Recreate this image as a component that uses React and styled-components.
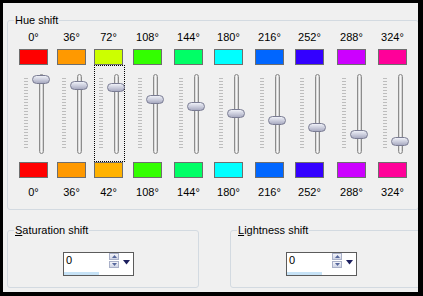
import React from 'react';
import styled, { createGlobalStyle } from 'styled-components';

const Global = createGlobalStyle`
  html, body { margin: 0; padding: 0; background: #000; }
  body {
    width: 423px; height: 296px; overflow: hidden;
    font-family: "Liberation Sans", Arial, sans-serif; font-size: 11px; color: #000;
  }
`;

const Frame = styled.div`
  box-sizing: border-box;
  width: 423px;
  height: 296px;
  border-style: solid;
  border-color: #000;
  border-width: 3px 5px 4px 3px;
  background: #f0f0f0;
  overflow: hidden;
  display: flex;
  flex-direction: column;
  align-items: flex-start;
`;

const Group = styled.fieldset`
  box-sizing: border-box;
  margin: 0;
  padding: ${(p) => p.$pad};
  border: 1px solid #d3dae1;
  border-radius: 3px;
  min-inline-size: 0;
  width: ${(p) => p.$w}px;
  flex: none;
`;

const Legend = styled.legend`
  margin-left: 6px;
  padding: 0 1px;
  font: 11px/13px "Liberation Sans", Arial, sans-serif;
  color: #000;
`;

const HueGroup = styled(Group)`
  margin: 11px 0 0 4px;
`;

const Columns = styled.div`
  display: grid;
  grid-template-columns: 38px 37px 39px 41px 40px 41px 40px 42px 41px 41px;
  padding-left: 11px;
`;

const Column = styled.div`
  display: flex;
  flex-direction: column;
  align-items: flex-start;
`;

const Degree = styled.div`
  width: 29px;
  text-align: center;
  line-height: 13px;
  font-size: 11px;
  white-space: nowrap;
  margin-top: ${(p) => (p.$bottom ? 8 : 0)}px;
  margin-bottom: ${(p) => (p.$bottom ? 0 : 5)}px;
`;

const Swatch = styled.div`
  box-sizing: border-box;
  width: 29px;
  height: 16px;
  border: 1px solid #6e6e6e;
  background: ${(p) => p.$color};
`;

const SliderBox = styled.div`
  box-sizing: border-box;
  position: relative;
  width: 31px;
  height: 97px;
  border: 1px ${(p) => (p.$focused ? 'dotted #000' : 'solid transparent')};
  display: flex;
  align-items: flex-start;
  padding-left: 4px;
`;

const Ticks = styled.div`
  width: 4px;
  height: 71px;
  margin-top: 12px;
  background: repeating-linear-gradient(to bottom, #bdbdbd 0 1px, transparent 1px 3px);
`;

const Track = styled.div`
  box-sizing: border-box;
  width: 5px;
  height: 80px;
  margin: 8px 0 0 11px;
  border: 1px solid #8c8c8c;
  border-radius: 3px;
  background: linear-gradient(to right, #cfcfcf, #f5f5f5 50%, #c6c6c6);
`;

const Thumb = styled.div`
  box-sizing: border-box;
  position: absolute;
  left: 12px;
  width: 18px;
  height: 9px;
  border: 1px solid #7a7c93;
  border-radius: 5px;
  background: linear-gradient(to bottom, #eef0f7, #c9cbdb 55%, #a9abc1);
`;

const BottomRow = styled.div`
  display: flex;
  gap: 31px;
  margin: 14px 0 0 4px;
`;

const SpinBox = styled.div`
  box-sizing: border-box;
  width: 71px;
  height: 24px;
  margin-left: 55px;
  border: 1px solid #5b5b5b;
  background: #fff;
  display: flex;
  flex-direction: column;
`;

const SpinTop = styled.div`
  display: flex;
  align-items: flex-start;
`;

const SpinValue = styled.span`
  width: 43px;
  padding: 1px 0 0 2px;
  line-height: 13px;
  font-size: 11px;
`;

const SpinButtons = styled.div`
  display: flex;
  flex-direction: column;
  gap: 1px;
`;

const SpinButton = styled.div`
  box-sizing: border-box;
  width: 10px;
  height: 7px;
  border: 1px solid #a9b0c8;
  background: linear-gradient(to bottom, #f4f5fa, #cfd4e6);
  display: flex;
  align-items: center;
  justify-content: center;
`;

const DropArrow = styled.svg`
  margin: 7px 0 0 4px;
`;

const SpinBar = styled.div`
  width: 35px;
  height: 3px;
  margin-top: auto;
  background: #c6e2f6;
`;

const hues = [
  { top: '0°', topC: '#ff0000', bot: '0°', botC: '#ff0000', v: 0 },
  { top: '36°', topC: '#ff9900', bot: '36°', botC: '#ff9900', v: 36 },
  { top: '72°', topC: '#ccff00', bot: '42°', botC: '#ffb200', v: 42, focused: true },
  { top: '108°', topC: '#33ff00', bot: '108°', botC: '#33ff00', v: 108 },
  { top: '144°', topC: '#00ff66', bot: '144°', botC: '#00ff66', v: 144 },
  { top: '180°', topC: '#00ffff', bot: '180°', botC: '#00ffff', v: 180 },
  { top: '216°', topC: '#0066ff', bot: '216°', botC: '#0066ff', v: 216 },
  { top: '252°', topC: '#3300ff', bot: '252°', botC: '#3300ff', v: 252 },
  { top: '288°', topC: '#cc00ff', bot: '288°', botC: '#cc00ff', v: 288 },
  { top: '324°', topC: '#ff0099', bot: '324°', botC: '#ff0099', v: 324 },
];

function Spinner() {
  return (
    <SpinBox>
      <SpinTop>
        <SpinValue>0</SpinValue>
        <SpinButtons>
          <SpinButton>
            <svg width="5" height="3" viewBox="0 0 5 3"><path d="M0 3 L2.5 0 L5 3 Z" fill="#56679c" /></svg>
          </SpinButton>
          <SpinButton>
            <svg width="5" height="3" viewBox="0 0 5 3"><path d="M0 0 L2.5 3 L5 0 Z" fill="#56679c" /></svg>
          </SpinButton>
        </SpinButtons>
        <DropArrow width="7" height="5" viewBox="0 0 7 5">
          <path d="M0 0 L7 0 L3.5 4.5 Z" fill="#1c1f5e" />
        </DropArrow>
      </SpinTop>
      <SpinBar />
    </SpinBox>
  );
}

export default function App() {
  return (
    <>
      <Global />
      <Frame>
        <HueGroup $w={412} $pad="4px 0 10px 0">
          <Legend>Hue shift</Legend>
          <Columns>
            {hues.map((h) => (
              <Column key={h.top}>
                <Degree>{h.top}</Degree>
                <Swatch $color={h.topC} />
                <SliderBox $focused={h.focused}>
                  <Ticks />
                  <Track />
                  <Thumb style={{ top: Math.round(8.5 + (h.v * 69) / 360) }} />
                </SliderBox>
                <Swatch $color={h.botC} />
                <Degree $bottom>{h.bot}</Degree>
              </Column>
            ))}
          </Columns>
        </HueGroup>
        <BottomRow>
          <Group $w={192} $pad="15px 0 11px 0">
            <Legend><u>S</u>aturation shift</Legend>
            <Spinner />
          </Group>
          <Group $w={192} $pad="15px 0 11px 0">
            <Legend><u>L</u>ightness shift</Legend>
            <Spinner />
          </Group>
        </BottomRow>
      </Frame>
    </>
  );
}
